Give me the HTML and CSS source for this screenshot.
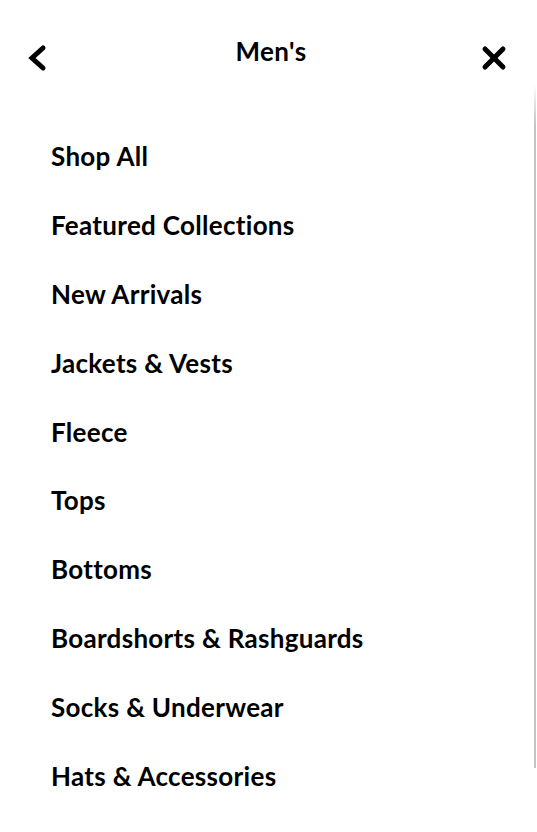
FILE: index.html
```html
<!DOCTYPE html>
<html lang="en">
<head>
    <meta charset="UTF-8">
    <meta name="viewport" content="width=device-width, initial-scale=1.0">
    <title>Men's</title>
    <link rel="stylesheet" href="styles.css">
</head>
<body>
    <div class="panel">
        <header class="top-bar">
            <button class="icon-btn back" aria-label="Back">
                <svg width="24" height="30" viewBox="0 0 24 30">
                    <polyline points="16,4 5,14 16,24" fill="none" stroke="#000" stroke-width="5" stroke-linecap="round" stroke-linejoin="miter"/>
                </svg>
            </button>
            <h1 class="title">Men's</h1>
            <button class="icon-btn close" aria-label="Close">
                <svg width="30" height="30" viewBox="0 0 30 30">
                    <line x1="6" y1="5" x2="24" y2="23" stroke="#000" stroke-width="5" stroke-linecap="round"/>
                    <line x1="24" y1="5" x2="6" y2="23" stroke="#000" stroke-width="5" stroke-linecap="round"/>
                </svg>
            </button>
        </header>

        <ul class="menu">
            <li><a href="#">Shop All</a></li>
            <li><a href="#">Featured Collections</a></li>
            <li><a href="#">New Arrivals</a></li>
            <li><a href="#">Jackets &amp; Vests</a></li>
            <li><a href="#">Fleece</a></li>
            <li><a href="#">Tops</a></li>
            <li><a href="#">Bottoms</a></li>
            <li><a href="#">Boardshorts &amp; Rashguards</a></li>
            <li><a href="#">Socks &amp; Underwear</a></li>
            <li><a href="#">Hats &amp; Accessories</a></li>
        </ul>

        <div class="edge"></div>
    </div>
</body>
</html>
```

FILE: styles.css
```css
body {
    margin: 0;
    background-color: #fff;
    font-family: Lato, "Noto Sans", Arial, sans-serif;
    color: #000;
}
.panel {
    position: relative;
    width: 537px;
    height: 832px;
    overflow: hidden;
}
.top-bar {
    display: grid;
    grid-template-columns: 1fr auto 1fr;
    align-items: start;
    height: 100px;
    padding: 0 28px 0 27px;
}
.icon-btn {
    background: none;
    border: none;
    padding: 0;
    margin-top: 44px;
    cursor: pointer;
}
.back {
    justify-self: start;
}
.close {
    justify-self: end;
}
.title {
    margin: 0;
    margin-top: 35px;
    padding-left: 6px;
    font-size: 26px;
    font-weight: bold;
    letter-spacing: 0.4px;
}
.menu {
    list-style: none;
    margin: 0;
    padding: 22px 0 0 51px;
}
.menu li {
    height: 68.8px;
    display: flex;
    align-items: center;
}
.menu a {
    color: #000;
    text-decoration: none;
    font-size: 26px;
    font-weight: bold;
    letter-spacing: 0.3px;
}
.edge {
    position: absolute;
    top: 84px;
    right: 1px;
    width: 2px;
    height: 684px;
    background: linear-gradient(to bottom, #fff 0, #c4c4c4 40px, #c4c4c4 100%);
}
```
